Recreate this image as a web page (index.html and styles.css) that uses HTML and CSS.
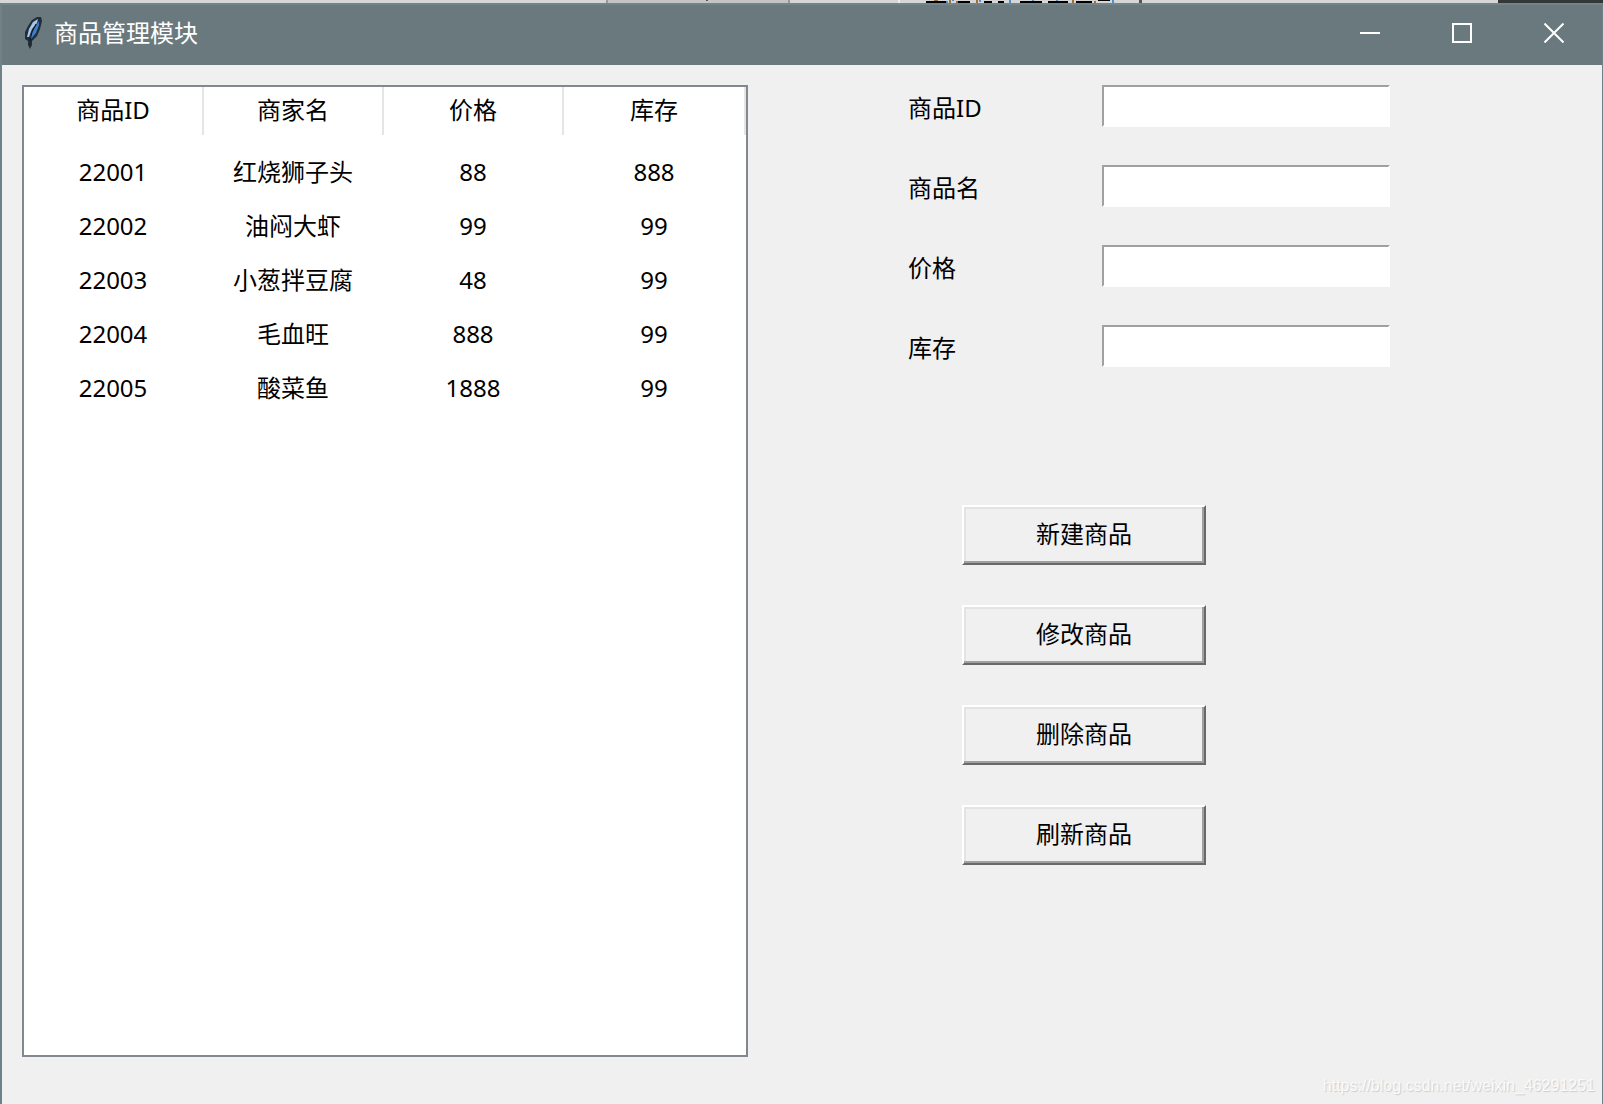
FILE: index.html
```html
<!DOCTYPE html>
<html lang="zh-CN">
<head>
<meta charset="utf-8">
<title>商品管理模块</title>
<link rel="stylesheet" href="styles.css">
</head>
<body>
<div class="backdrop" aria-hidden="true">
  <svg width="1603" height="3" shape-rendering="crispEdges">
    <path fill="#d6d6d6" d="M0 0H1603V3H0z"/>
    <path fill="#c4c4c4" d="M608 0H788V3H608z"/>
    <path fill="#999" d="M606 0H608V3H606zM788 0H790V3H788z"/>
    <path fill="#555" d="M706 0H708V1H706zM1139 0H1142V3H1139z"/>
    <path fill="#eee" d="M898 0H900V3H898z"/>
    <path fill="#000" d="M926 1H946V3H926zM958 1H970V3H958zM984 1H992V3H984zM998 1H1004V3H998zM1020 1H1042V3H1020zM1048 1H1068V3H1048zM1076 1H1092V3H1076zM1098 0H1110V1H1098z"/>
    <path fill="#a0703c" d="M934 0H938V1H934zM949 0H951V3H949zM956 1H958V3H956zM976 0H978V3H976zM1094 1H1096V3H1094zM1072 0H1074V3H1072z"/>
    <path fill="#4c90cc" d="M946 1H948V3H946zM952 0H954V1H952zM979 0H981V2H979zM1009 0H1011V3H1009zM1032 0H1034V1H1032zM1056 0H1058V1H1056zM1112 0H1114V3H1112z"/>
    <path fill="#333737" d="M1498 0H1603V3H1498z"/>
  </svg>
</div>
<main class="window">
  <header class="titlebar">
    <svg class="feather" width="18" height="32" viewBox="0 0 18 32" aria-hidden="true">
      <path fill="#222c38" d="M17 0 13 0 8 3 4 9 1 15 1 22 4 24 4 28 6 32 8 28 8 24 13 19 16 12 18 4z"/>
      <path fill="#3f7fc8" d="M15 4 15 8 12 16 7 22 6 20 10 12z"/>
      <path fill="#a6c8ea" d="M14 2 9 5 5 12 3 20 5 20 8 12 13 6z"/>
      <path fill="none" stroke="#101822" d="M12 7 8 15 6 24"/>
    </svg>
    <h1 class="title">商品管理模块</h1>
    <div class="controls">
      <button class="control" type="button" aria-label="最小化"><svg width="20" height="20" viewBox="0 0 20 20"><path d="M0 10H20"/></svg></button>
      <button class="control" type="button" aria-label="最大化"><svg width="20" height="20" viewBox="0 0 20 20"><path d="M1 1H19V19H1z"/></svg></button>
      <button class="control" type="button" aria-label="关闭"><svg width="20" height="20" viewBox="0 0 20 20"><path d="M0.5 0.5 19.5 19.5M19.5 0.5 0.5 19.5"/></svg></button>
    </div>
  </header>
  <div class="content">
    <section class="list">
      <table class="goods">
        <thead>
          <tr><th>商品ID</th><th>商家名</th><th>价格</th><th>库存</th></tr>
        </thead>
        <tbody>
          <tr><td>22001</td><td>红烧狮子头</td><td>88</td><td>888</td></tr>
          <tr><td>22002</td><td>油闷大虾</td><td>99</td><td>99</td></tr>
          <tr><td>22003</td><td>小葱拌豆腐</td><td>48</td><td>99</td></tr>
          <tr><td>22004</td><td>毛血旺</td><td>888</td><td>99</td></tr>
          <tr><td>22005</td><td>酸菜鱼</td><td>1888</td><td>99</td></tr>
        </tbody>
      </table>
    </section>
    <form class="editor">
      <div class="fields">
        <label for="goods-id">商品ID</label><input id="goods-id" type="text">
        <label for="goods-name">商品名</label><input id="goods-name" type="text">
        <label for="price">价格</label><input id="price" type="text">
        <label for="stock">库存</label><input id="stock" type="text">
      </div>
      <div class="actions">
        <button class="action" type="button">新建商品</button>
        <button class="action" type="button">修改商品</button>
        <button class="action" type="button">删除商品</button>
        <button class="action" type="button">刷新商品</button>
      </div>
    </form>
  </div>
</main>
<div class="watermark">https://blog.csdn.net/weixin_46291251</div>
</body>
</html>
```
FILE: styles.css
```css
* {
  box-sizing: border-box;
}

body {
  margin: 0;
  min-height: 100vh;
  display: flex;
  flex-direction: column;
  position: relative;
  background: #f0f0f0;
  color: #000;
  font: 24px/32px "Noto Sans", "Noto Sans CJK SC", sans-serif;
}

.backdrop {
  height: 3px;
  overflow: hidden;
  background: #333737;
}

.backdrop svg {
  display: block;
}

.window {
  flex: 1;
  display: flex;
  flex-direction: column;
  border-left: 2px solid #6f8189;
  border-right: 1px solid #6f8189;
}

.titlebar {
  height: 62px;
  display: flex;
  align-items: center;
  padding: 0 2px 4px 22px;
  background: #6a797e;
  border-top: 2px solid #73858b;
  color: #fff;
}

.title {
  margin: 0 0 0 12px;
  font-size: 24px;
  font-weight: 400;
}

.controls {
  margin-left: auto;
  display: flex;
  align-self: stretch;
}

.control {
  width: 92px;
  padding: 0;
  border: 0;
  background: none;
  display: grid;
  place-items: center;
}

.control svg {
  display: block;
  fill: none;
  stroke: #fff;
  stroke-width: 2;
}

.content {
  flex: 1;
  display: grid;
  grid-template-columns: 726fr 854fr;
  padding: 20px 0 47px 20px;
}

.list {
  background: #fff;
  border: 2px solid #828790;
}

.goods {
  width: 100%;
  table-layout: fixed;
  border-collapse: separate;
  border-spacing: 0;
  text-align: center;
}

.goods th,
.goods td {
  padding: 0;
  font-weight: 400;
  border-right: 2px solid transparent;
}

.goods th {
  height: 48px;
  padding-bottom: 2px;
  border-color: #e5e5e5;
}

.goods th:last-child {
  width: 182px;
}

.goods td {
  height: 54px;
}

.goods thead::after {
  content: "";
  display: block;
  height: 10px;
}

.editor {
  padding-left: 160px;
}

.fields {
  display: grid;
  grid-template-columns: 194px 288px;
  row-gap: 38px;
  align-items: center;
}

.fields label {
  padding-top: 3px;
}

.fields input {
  width: 100%;
  height: 42px;
  padding: 0 4px;
  background: #fff;
  border: 2px solid #fff;
  border-top-color: #a0a0a0;
  border-left-color: #a0a0a0;
  font: inherit;
}

.actions {
  display: grid;
  grid-template-columns: 244px;
  row-gap: 40px;
  padding: 138px 0 0 54px;
}

.action {
  height: 60px;
  padding: 0 0 2px;
  background: #f0f0f0;
  border: 2px solid;
  border-color: #fff #696969 #696969 #fff;
  box-shadow: inset -2px -2px #a0a0a0, inset 2px 2px #e3e3e3;
  color: #000;
  font: inherit;
}

.watermark {
  position: absolute;
  right: 8px;
  bottom: 8px;
  color: #fafafa;
  text-shadow: 1px 1px 1px #ccc;
  font: 16px/20px "Liberation Sans", sans-serif;
}
```
